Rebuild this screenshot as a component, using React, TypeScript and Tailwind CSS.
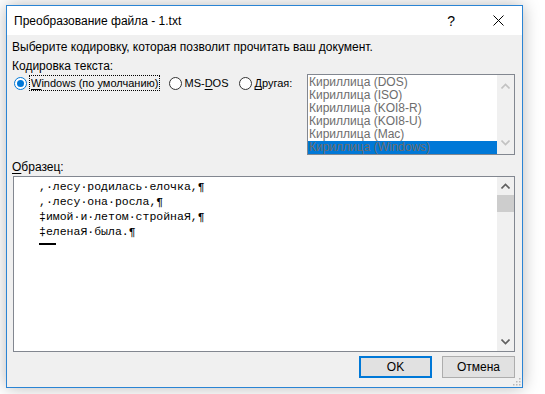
import React from 'react';

const encodings = [
  'Кириллица (DOS)',
  'Кириллица (ISO)',
  'Кириллица (KOI8-R)',
  'Кириллица (KOI8-U)',
  'Кириллица (Mac)',
  'Кириллица (Windows)',
];

const sampleLines = [
  ',·лесу·родилась·елочка,¶',
  ',·лесу·она·росла,¶',
  '‡имой·и·летом·стройнаЯ,¶',
  '‡еленаЯ·была.¶',
];

const Radio: React.FC<{ checked?: boolean }> = ({ checked }) => (
  <span
    className={
      'flex h-[13px] w-[13px] shrink-0 items-center justify-center rounded-full border bg-white ' +
      (checked ? 'border-[#0078d7]' : 'border-[#333333]')
    }
  >
    {checked && <span className="h-[7px] w-[7px] rounded-full bg-[#0078d7]" />}
  </span>
);

const Chevron: React.FC<{ up?: boolean; color: string }> = ({ up, color }) => (
  <svg width="9" height="6" viewBox="0 0 9 6" className="block">
    <path d={up ? 'M0.5 5.5 L4.5 1.5 L8.5 5.5' : 'M0.5 0.5 L4.5 4.5 L8.5 0.5'} fill="none" stroke={color} strokeWidth="1.6" />
  </svg>
);

export default function App() {
  return (
    <div className="h-[394px] w-[545px] bg-white pl-[6px] pt-[5px] font-['Liberation_Sans',sans-serif] text-[12px] leading-[16px] text-black">
      <div className="relative flex h-[383px] w-[517px] flex-col border border-[#2a84d4] bg-[#f0f0f0] shadow-[0_0_16px_rgba(0,0,0,0.28)]">
        {/* Title bar */}
        <div className="flex h-[29px] items-center bg-white pl-[7px]">
          <span className="flex-1 text-[12px] text-[#000000]">Преобразование файла - 1.txt</span>
          <span className="mr-[38px] text-[14px]">?</span>
          <svg width="11" height="11" viewBox="0 0 11 11" className="mr-[18px]">
            <path d="M0.5 0.5 L10.5 10.5 M10.5 0.5 L0.5 10.5" stroke="#000" strokeWidth="1" />
          </svg>
        </div>

        <div className="flex flex-1 flex-col px-[5px]">
          <div className="mt-[4px]">Выберите кодировку, которая позволит прочитать ваш документ.</div>

          <div className="mt-[3px] flex">
            <div className="flex w-[295px] shrink-0 flex-col">
              <div>Кодировка текста:</div>
              <div className="mt-[1px] flex h-[16px] items-center whitespace-nowrap text-[11px]">
                <span className="ml-[2px]"><Radio checked /></span>
                <span className="ml-[2px] shrink-0 border border-dotted border-black px-px leading-[14px]">
                  <span className="underline underline-offset-2">W</span>indows (по умолчанию)
                </span>
                <span className="ml-[9px]"><Radio /></span>
                <span className="ml-[2px] shrink-0">
                  MS-<span className="underline underline-offset-2">D</span>OS
                </span>
                <span className="ml-[10px]"><Radio /></span>
                <span className="ml-[3px] shrink-0">
                  <span className="underline underline-offset-2">Д</span>ругая:
                </span>
              </div>
            </div>

            <div className="mt-[16px] flex h-[81px] w-[208px] shrink-0 border border-[#828790] bg-white">
              <div className="flex-1 pt-px">
                {encodings.map((e, i) => (
                  <div
                    key={e}
                    className={
                      'h-[13px] pl-[1px] leading-[13px] text-[#6d6d6d] ' + (i === 5 ? 'bg-[#0078d7]' : '')
                    }
                  >
                    {e}
                  </div>
                ))}
              </div>
              <div className="flex w-[17px] flex-col items-center justify-between bg-[#f0f0f0] py-[8px]">
                <Chevron up color="#c2c2c2" />
                <Chevron color="#c2c2c2" />
              </div>
            </div>
          </div>

          <div className="mt-[4px]">
            <span className="underline underline-offset-2">О</span>бразец:
          </div>

          <div className="ml-px mt-px flex h-[176px] w-[502px] border border-[#828790] bg-white">
            <div className="flex-1 pl-[25px] pt-[2px] font-['Liberation_Mono',monospace] text-[11.5px] leading-[15px]">
              {sampleLines.map((l) => (
                <div key={l} className="whitespace-pre">{l}</div>
              ))}
              <div className="mt-[4px] h-[2px] w-[17px] bg-black" />
            </div>
            <div className="flex w-[17px] flex-col items-center bg-[#f0f0f0]">
              <div className="mt-[6px]"><Chevron up color="#606060" /></div>
              <div className="mt-[6px] h-[17px] w-[17px] bg-[#cdcdcd]" />
              <div className="flex-1" />
              <div className="mb-[6px]"><Chevron color="#606060" /></div>
            </div>
          </div>

          <div className="mt-[4px] flex justify-end gap-[10px] pr-[2px]">
            <button className="h-[22px] w-[73px] border-2 border-[#0078d7] bg-[#e1e1e1] text-[12px]">OK</button>
            <button className="h-[22px] w-[73px] border border-[#adadad] bg-[#e1e1e1] text-[12px]">Отмена</button>
          </div>
        </div>

        {/* resize grip */}
        <svg width="10" height="10" viewBox="0 0 10 10" className="absolute bottom-[1px] right-[1px]">
          {[
            [8, 2], [8, 5], [5, 5], [8, 8], [5, 8], [2, 8],
          ].map(([x, y]) => (
            <rect key={`${x}-${y}`} x={x} y={y} width="1.5" height="1.5" fill="#b8b8b8" />
          ))}
        </svg>
      </div>
    </div>
  );
}
